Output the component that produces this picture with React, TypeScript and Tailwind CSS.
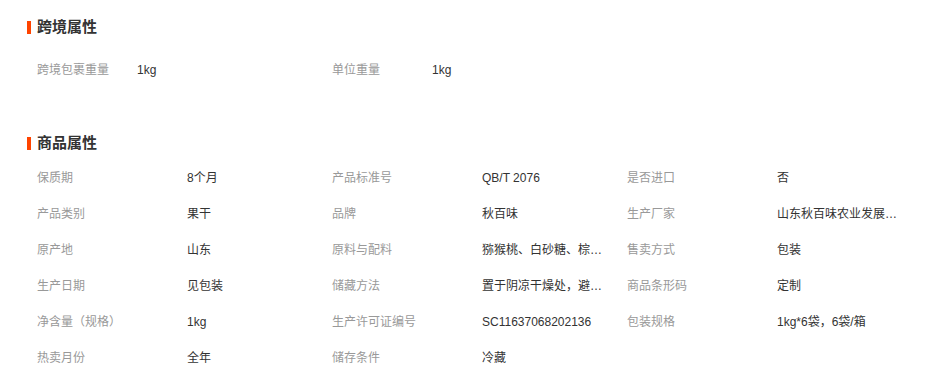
const cross = [
  { label: "跨境包裹重量", value: "1kg" },
  { label: "单位重量", value: "1kg" },
];

const props = [
  ["保质期", "8个月", "产品标准号", "QB/T 2076", "是否进口", "否"],
  ["产品类别", "果干", "品牌", "秋百味", "生产厂家", "山东秋百味农业发展有限公司"],
  ["原产地", "山东", "原料与配料", "猕猴桃、白砂糖、棕榈油", "售卖方式", "包装"],
  ["生产日期", "见包装", "储藏方法", "置于阴凉干燥处，避免阳光直射", "商品条形码", "定制"],
  ["净含量（规格）", "1kg", "生产许可证编号", "SC11637068202136", "包装规格", "1kg*6袋，6袋/箱"],
  ["热卖月份", "全年", "储存条件", "冷藏"],
];

function Title({ text }: { text: string }) {
  return (
    <div className="flex h-[30px] items-center pl-[27px]">
      <span className="h-[13px] w-[4px] bg-[#ff4400]" />
      <span className="ml-[6px] text-[15px] font-bold text-[#333]">{text}</span>
    </div>
  );
}

export default function App() {
  return (
    <div
      className="h-[375px] w-[930px] bg-white pt-[12px] text-[12px]"
      style={{ fontFamily: '"Liberation Sans", "Noto Sans CJK SC", sans-serif' }}
    >
      <Title text="跨境属性" />
      <div className="mt-[10px] flex h-[36px] items-center pl-[37px] leading-[36px]">
        {cross.map((c) => (
          <div key={c.label} className="flex w-[295px]">
            <span className="w-[100px] text-[#999]">{c.label}</span>
            <span className="text-[#333]">{c.value}</span>
          </div>
        ))}
      </div>

      <div className="mt-[40px]">
        <Title text="商品属性" />
      </div>
      <div className="mt-[2px]">
        {props.map((row, i) => (
          <div key={i} className="flex h-[36px] items-center pl-[37px] leading-[36px]">
            {[0, 2, 4].map((j) =>
              row[j] ? (
                <div key={j} className="flex w-[295px]">
                  <span className="w-[150px] text-[#999]">{row[j]}</span>
                  <span className="w-[125px] overflow-hidden text-ellipsis whitespace-nowrap text-[#333]">
                    {row[j + 1]}
                  </span>
                </div>
              ) : null
            )}
          </div>
        ))}
      </div>
    </div>
  );
}
